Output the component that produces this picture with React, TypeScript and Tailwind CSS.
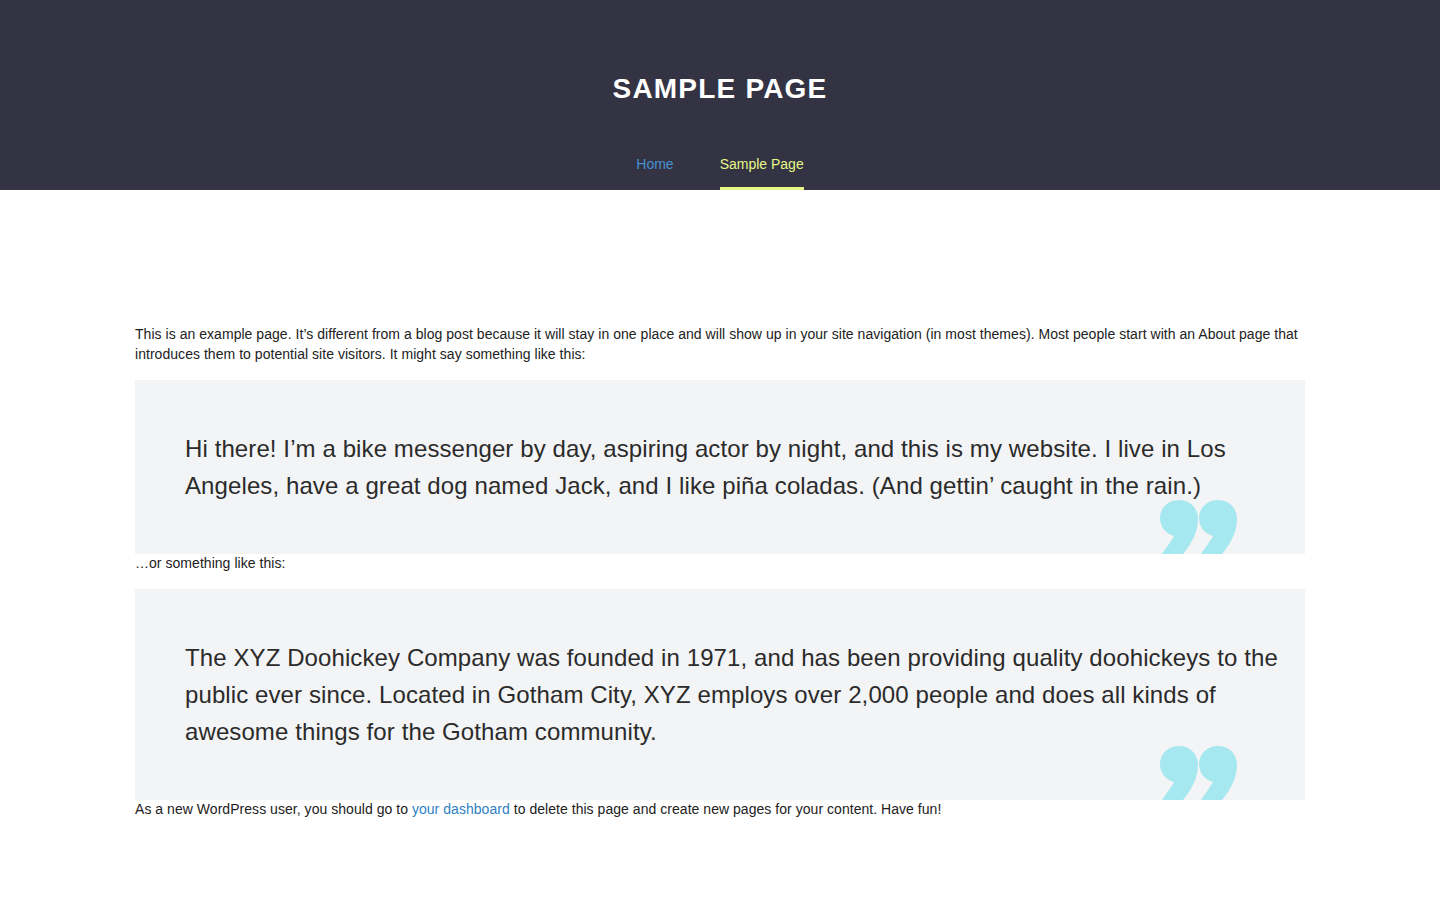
import React from "react";

function QuoteMark() {
  return (
    <svg
      className="absolute right-[65px] bottom-0"
      width="80"
      height="54"
      viewBox="0 0 80 54"
      aria-hidden="true"
    >
      <g fill="#a6e8ef">
        <path d="M19 0 C30 0 38 8 38 19 C38 30 33 42 23 54 L2 54 C8 45 12 40 14 36 C6 34 0 27 0 18 C0 8 8 0 19 0 Z" />
        <path d="M58 0 C69 0 77 8 77 19 C77 30 72 42 62 54 L41 54 C47 45 51 40 53 36 C45 34 39 27 39 18 C39 8 47 0 58 0 Z" />
      </g>
    </svg>
  );
}

function Quote({ children }: { children: React.ReactNode }) {
  return (
    <blockquote className="relative overflow-hidden bg-[#f3f4f6] my-4 pl-[50px] pr-[25px] py-[50px] text-[24px] leading-[37px] tracking-[0.1px] text-[#2b2b2b]">
      <p>{children}</p>
      <QuoteMark />
    </blockquote>
  );
}

export default function App() {
  return (
    <div className="min-h-[900px] bg-white font-['Liberation_Sans',Arial,sans-serif]">
      <header className="bg-[#333344] flex flex-col items-center pt-[72px]">
        <h1 className="text-white text-[28px] leading-[34px] font-bold tracking-[1.2px] uppercase">
          Sample Page
        </h1>
        <nav className="mt-[48px] flex gap-[46px] text-[14px] leading-[20px]">
          <a href="#" className="text-[#4a90d0] pb-[13px] border-b-[3px] border-transparent">
            Home
          </a>
          <a href="#" className="text-[#e6f786] pb-[13px] border-b-[3px] border-[#e6f786]">
            Sample Page
          </a>
        </nav>
      </header>

      <main className="mx-[135px] pt-[134px] text-[14px] leading-[20px] tracking-[0.04px] text-[#222]">
        <p>
          This is an example page. It’s different from a blog post because it will stay in one place and will show up in
          your site navigation (in most themes). Most people start with an About page that introduces them to potential
          site visitors. It might say something like this:
        </p>
        <Quote>
          Hi there! I’m a bike messenger by day, aspiring actor by night, and this is my website. I live in Los Angeles,
          have a great dog named Jack, and I like piña coladas. (And gettin’ caught in the rain.)
        </Quote>
        <p className="-mt-[17px]">…or something like this:</p>
        <Quote>
          The XYZ Doohickey Company was founded in 1971, and has been providing quality doohickeys to the public ever
          since. Located in Gotham City, XYZ employs over 2,000 people and does all kinds of awesome things for the
          Gotham community.
        </Quote>
        <p className="-mt-[17px]">
          As a new WordPress user, you should go to{" "}
          <a href="#" className="text-[#2e7fc4]">
            your dashboard
          </a>{" "}
          to delete this page and create new pages for your content. Have fun!
        </p>
      </main>
    </div>
  );
}
